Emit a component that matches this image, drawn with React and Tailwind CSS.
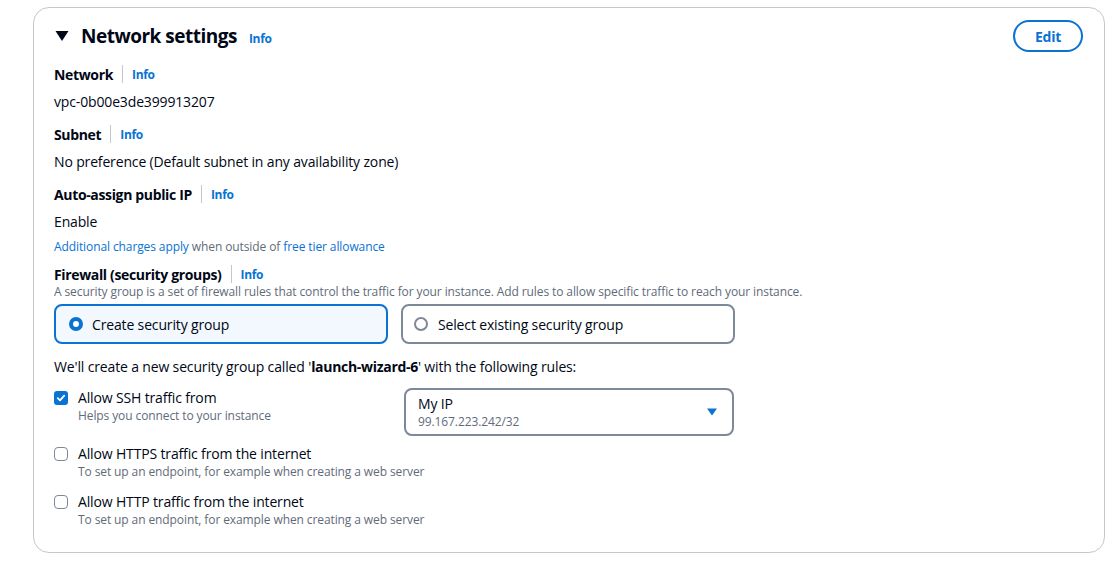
import React from 'react';

const InfoLink = ({ className = '' }) => (
    <a className={`text-[12px] font-bold tracking-[-0.3px] text-[#0972d3] ${className}`}>Info</a>
);

const FieldLabel = ({ children }) => (
    <div className="flex items-center h-5 text-[14px] font-bold tracking-[-0.35px] text-[#000716]">
        <span>{children}</span>
        <span className="mx-[9px] h-[18px] w-px bg-[#c6c6cd]" />
        <InfoLink className="mt-[2px]" />
    </div>
);

const Checkbox = ({ checked }) =>
    checked ? (
        <span className="flex h-[14px] w-[14px] items-center justify-center rounded-[3px] bg-[#0972d3]">
            <svg width="10" height="10" viewBox="0 0 10 10" fill="none">
                <path d="M1.8 5.2 L4 7.3 L8.2 2.6" stroke="white" strokeWidth="1.8" strokeLinecap="round" strokeLinejoin="round" />
            </svg>
        </span>
    ) : (
        <span className="block h-[14px] w-[14px] rounded-[4px] border-[1.5px] border-[#7d8998] bg-white" />
    );

const Rule = ({ checked, title, desc, children }) => (
    <div className="flex items-start">
        <div className="flex w-[350px] items-start">
            <div className="pt-[3px]">
                <Checkbox checked={checked} />
            </div>
            <div className="ml-[10px] whitespace-nowrap">
                <div className="h-5 leading-5 text-[14px] tracking-[-0.15px] text-[#000716]">{title}</div>
                <div className="h-4 leading-4 text-[12px] tracking-[-0.1px] text-[#5f6b7a]">{desc}</div>
            </div>
        </div>
        {children}
    </div>
);

export default function App() {
    return (
        <div className="min-h-screen bg-white pt-[7px] pl-[33px] pr-[10px] font-['Open_Sans','Liberation_Sans',sans-serif] text-[#000716]">
            <div className="w-[1072px] rounded-[16px] border border-[#c6c6cd] bg-white px-5 pt-3 pb-[24px] text-[14px] tracking-[-0.15px]">
                <div className="flex h-8 items-center justify-between">
                    <div className="flex items-center">
                        <svg width="14" height="12" viewBox="0 0 14 12" className="mr-3 ml-[1px]">
                            <path d="M0.5 1 H13.5 L7 11 Z" fill="#000716" />
                        </svg>
                        <h2 className="text-[19px] font-bold leading-6 tracking-[-0.5px]">Network settings</h2>
                        <InfoLink className="ml-3 mt-[6px]" />
                    </div>
                    <button className="mr-[1px] h-8 w-[70px] rounded-full border-2 border-[#0972d3] text-[14px] font-bold tracking-[-0.3px] text-[#0972d3]">
                        Edit
                    </button>
                </div>

                <div className="mt-3">
                    <FieldLabel>Network</FieldLabel>
                    <div className="mt-2 h-5 leading-5">vpc-0b00e3de399913207</div>
                </div>

                <div className="mt-3">
                    <FieldLabel>Subnet</FieldLabel>
                    <div className="mt-2 h-5 leading-5">No preference (Default subnet in any availability zone)</div>
                </div>

                <div className="mt-3">
                    <FieldLabel>Auto-assign public IP</FieldLabel>
                    <div className="mt-2 h-5 leading-5">Enable</div>
                    <div className="mt-[7px] h-4 leading-4 text-[12px] tracking-[-0.1px] text-[#5f6b7a]">
                        <a className="text-[#0972d3]">Additional charges apply</a> when outside of{' '}
                        <a className="text-[#0972d3]">free tier allowance</a>
                    </div>
                </div>

                <div className="mt-[9px]">
                    <FieldLabel>Firewall (security groups)</FieldLabel>
                    <div className="h-4 leading-4 text-[12px] tracking-[-0.1px] text-[#5f6b7a]">
                        A security group is a set of firewall rules that control the traffic for your instance. Add rules to allow specific traffic to reach your instance.
                    </div>
                    <div className="mt-1 flex gap-[13px]">
                        <div className="flex h-10 w-[334px] items-center rounded-[8px] border-2 border-[#0972d3] bg-[#f2f8fd] px-[13px]">
                            <span className="block h-[14px] w-[14px] rounded-full border-[4px] border-[#0972d3] bg-white" />
                            <span className="ml-[9px]">Create security group</span>
                        </div>
                        <div className="flex h-10 w-[334px] items-center rounded-[8px] border-2 border-[#7d8998] bg-white px-[11px]">
                            <span className="block h-[14px] w-[14px] rounded-full border-2 border-[#7d8998] bg-white" />
                            <span className="ml-[10px]">Select existing security group</span>
                        </div>
                    </div>
                </div>

                <div className="mt-[13px] h-5 leading-5">
                    We'll create a new security group called '<span className="font-bold tracking-[-0.3px]">launch-wizard-6</span>' with the following rules:
                </div>

                <div className="mt-[11px]">
                    <Rule checked title="Allow SSH traffic from" desc="Helps you connect to your instance">
                        <div className="flex h-12 w-[330px] items-center justify-between rounded-[8px] border-2 border-[#7d8998] pl-3 pr-[14px]">
                            <div>
                                <div className="h-5 leading-5">My IP</div>
                                <div className="h-4 leading-4 text-[12px] tracking-[-0.1px] text-[#5f6b7a]">99.167.223.242/32</div>
                            </div>
                            <svg width="12" height="10" viewBox="0 0 12 10">
                                <path d="M1 1.5 H11 L6 8.5 Z" fill="#0972d3" />
                            </svg>
                        </div>
                    </Rule>
                </div>

                <div className="mt-[8px]">
                    <Rule title="Allow HTTPS traffic from the internet" desc="To set up an endpoint, for example when creating a web server" />
                </div>
                <div className="mt-3">
                    <Rule title="Allow HTTP traffic from the internet" desc="To set up an endpoint, for example when creating a web server" />
                </div>
            </div>
        </div>
    );
}
